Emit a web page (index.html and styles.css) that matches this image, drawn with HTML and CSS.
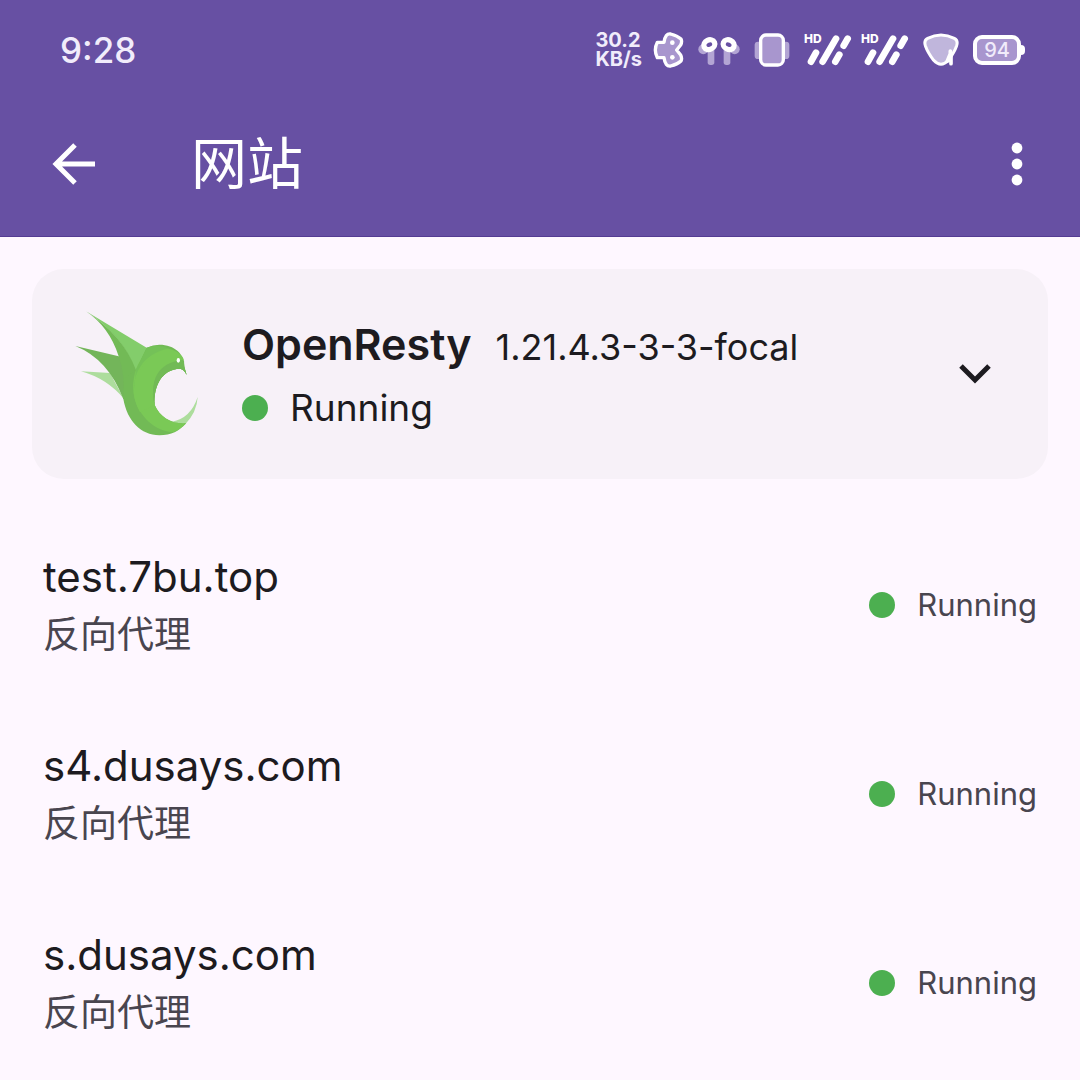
FILE: index.html
```html
<!DOCTYPE html>
<html lang="zh-CN">
<head>
    <meta charset="UTF-8">
    <meta name="viewport" content="width=device-width, initial-scale=1.0">
    <title>网站</title>
    <link rel="stylesheet" href="styles.css">
</head>
<body>
    <header class="top">
        <div class="status-bar">
            <span class="clock">9:28</span>
            <div class="status-icons">
                <div class="net-speed">30.2<br>KB/s</div>
                <svg class="butterfly" width="32" height="38" viewBox="0 0 96 114">
                    <path d="M36 34 Q40 6 56 9 Q76 14 87 24 Q91 32 86 42 L74 57 L86 72 Q91 82 87 90 Q76 100 56 105 Q40 108 36 80 L16 80 Q4 57 16 34 Z" fill="#a896ce" stroke="#fff" stroke-width="10" stroke-linejoin="round"/>
                    <circle cx="61" cy="35" r="7" fill="#fff"/>
                    <circle cx="61" cy="79" r="7" fill="#fff"/>
                </svg>
                <svg class="earbuds" width="42" height="36" viewBox="3 0 126 108">
                    <g fill="#b3a5d4">
                        <circle cx="19" cy="52" r="15"/>
                        <circle cx="113" cy="52" r="15"/>
                        <rect x="32" y="46" width="20" height="53" rx="8"/>
                        <rect x="80" y="46" width="20" height="53" rx="8"/>
                    </g>
                    <g fill="#6750a3" stroke="#fff" stroke-width="16">
                        <ellipse cx="37" cy="38" rx="17" ry="14" transform="rotate(-25 37 38)"/>
                        <ellipse cx="95" cy="38" rx="17" ry="14" transform="rotate(25 95 38)"/>
                    </g>
                </svg>
                <svg class="vibrate" width="36" height="34" viewBox="0 0 108 102">
                    <rect x="2" y="26" width="104" height="52" rx="10" fill="#b3a5d4"/>
                    <rect x="20" y="6" width="68" height="90" rx="16" fill="#a896ce" stroke="#fff" stroke-width="10"/>
                </svg>
                <div class="signals">
                    <div class="signal">
                        <span class="hd">HD</span>
                        <svg width="48" height="34" viewBox="0 0 144 102">
                            <path d="M21 86 L36 59 M56 86 L96 17 M94 86 L106 65 M119 38 L131 17" fill="none" stroke="#fff" stroke-width="20" stroke-linecap="round"/>
                        </svg>
                    </div>
                    <div class="signal">
                        <span class="hd">HD</span>
                        <svg width="48" height="34" viewBox="0 0 144 102">
                            <path d="M21 86 L36 59 M56 86 L96 17 M94 86 L106 65 M119 38 L131 17" fill="none" stroke="#fff" stroke-width="20" stroke-linecap="round"/>
                        </svg>
                    </div>
                </div>
                <svg class="wifi" width="36" height="34" viewBox="0 0 108 102">
                    <path d="M14 16 Q54 -4 94 16 Q106 22 101 38 Q94 58 76 82 Q54 106 32 82 Q14 58 7 38 Q2 22 14 16 Z" fill="#c0b6dc" stroke="#fff" stroke-width="9"/>
                    <path d="M82 54 V84 M82 62 L73 84 M84 68 V92" fill="none" stroke="#fff" stroke-width="11" stroke-linecap="round"/>
                </svg>
                <div class="battery">94</div>
            </div>
        </div>
        <nav class="app-bar">
            <button class="icon-button" aria-label="返回">
                <svg width="44" height="44" viewBox="0 0 44 44">
                    <path d="M43 22 H5 M23 3 L4 22 L23 41" fill="none" stroke="#fff" stroke-width="5"/>
                </svg>
            </button>
            <h1 class="title">网站</h1>
            <button class="icon-button" aria-label="更多">
                <svg width="12" height="44" viewBox="0 0 12 44" fill="#fff">
                    <circle cx="6" cy="6" r="5.4"/>
                    <circle cx="6" cy="22" r="5.4"/>
                    <circle cx="6" cy="38" r="5.4"/>
                </svg>
            </button>
        </nav>
    </header>

    <main>
        <section class="card">
            <svg class="logo" width="150" height="150" viewBox="0 0 450 450">
                <path d="M63 217 L150 222 L192 300 Q142 239 63 217 Z" fill="#addd9d"/>
                <path d="M46 141 L176 172 L236 215 L222 300 L190 300 Q144 180 46 141 Z" fill="#73b55a"/>
                <path d="M78 37 L260 146 L290 180 L226 216 Q190 110 78 37 Z" fill="#83cd6b"/>
                <path d="M78 37 Q190 110 228 214 L240 300 L190 300 Q196 226 176 172 Q148 84 78 37 Z" fill="#72ba56"/>
                <path d="M413 294 Q411 340 374 378 L336 368 Q392 358 413 294 Z" fill="#addd9d"/>
                <!-- body -->
                <path d="M260 146 Q279 137 298 137 C344 137 374 165 373 204 L380 228 Q373 212 360 209 C304 210 280 264 284 318 C300 354 334 376 378 373 C358 396 334 409 298 409 C242 408 202 366 190 300 L192 240 L228 212 Z" fill="#72ba56"/>
                <path d="M326 148 C240 130 204 236 226 306 C240 350 280 394 338 400 Q362 392 378 373 C334 376 300 354 284 318 Q266 272 286 232 C304 180 316 156 326 148 Z" fill="#7ac956"/>
                <path d="M360 209 C304 210 280 264 284 318 C268 270 276 190 322 148 Q366 158 373 204 L380 228 Q373 212 360 209 Z" fill="#72ba56"/>
                <path d="M322 148 C280 160 234 200 222 262 Q218 300 240 340 L284 318 C270 250 286 190 372 182 Q360 156 322 148 Z" fill="#7ac956"/>
                <path d="M360 209 C304 210 280 264 284 318 C268 262 290 194 372 184 L373 204 L380 228 Q373 212 360 209 Z" fill="#72ba56"/>
                <path d="M260 146 Q292 134 326 148 C262 162 222 208 222 270 L228 212 Z" fill="#74c158"/>
                <ellipse cx="355" cy="184" rx="5" ry="7" fill="#fff"/>
            </svg>
            <div class="app-info">
                <div class="app-name">
                    <h2>OpenResty</h2>
                    <span class="version">1.21.4.3-3-3-focal</span>
                </div>
                <div class="app-state"><i class="dot"></i>Running</div>
            </div>
            <button class="icon-button" aria-label="展开">
                <svg width="32" height="20" viewBox="0 0 32 20">
                    <path d="M2 2 L16 16 L30 2" fill="none" stroke="#1d1b20" stroke-width="5"/>
                </svg>
            </button>
        </section>

        <ul class="sites">
            <li class="site">
                <div class="site-info">
                    <div class="domain">test.7bu.top</div>
                    <div class="kind">反向代理</div>
                </div>
                <div class="site-state"><i class="dot"></i>Running</div>
            </li>
            <li class="site">
                <div class="site-info">
                    <div class="domain">s4.dusays.com</div>
                    <div class="kind">反向代理</div>
                </div>
                <div class="site-state"><i class="dot"></i>Running</div>
            </li>
            <li class="site">
                <div class="site-info">
                    <div class="domain">s.dusays.com</div>
                    <div class="kind">反向代理</div>
                </div>
                <div class="site-state"><i class="dot"></i>Running</div>
            </li>
        </ul>
    </main>
</body>
</html>
```
FILE: styles.css
```css
* {
    box-sizing: border-box;
}

body {
    margin: 0;
    background-color: #fef7ff;
    color: #1d1b20;
    font-family: Inter, "Noto Sans CJK SC", sans-serif;
}

.top {
    background-color: #6750a3;
    border-bottom: 1px solid #553c93;
    color: #fff;
}

.status-bar {
    display: flex;
    justify-content: space-between;
    align-items: center;
    height: 100px;
    padding: 0 59px 0 60px;
}

.clock {
    color: #f1ecfb;
    font-size: 35px;
    font-weight: 500;
    line-height: 44px;
}

.status-icons {
    display: flex;
    align-items: center;
    gap: 14px;
}

.net-speed {
    margin-right: -4px;
    color: #f1ecfb;
    font-size: 20px;
    font-weight: 700;
    line-height: 19px;
}

.signals {
    display: flex;
    gap: 9px;
}

.signal {
    position: relative;
    display: flex;
}

.hd {
    position: absolute;
    top: 0;
    left: 0;
    font-size: 12px;
    font-weight: 800;
    line-height: 12px;
}

.battery {
    position: relative;
    width: 48px;
    height: 30px;
    border: 4px solid #fff;
    border-radius: 9px;
    background-color: #a896ce;
    color: #f1ecfb;
    font-size: 20px;
    font-weight: 500;
    line-height: 22px;
    text-align: center;
}

.battery::after {
    content: "";
    position: absolute;
    top: 6px;
    right: -8px;
    width: 5px;
    height: 10px;
    border-radius: 0 4px 4px 0;
    background-color: #fff;
}

.app-bar {
    display: flex;
    align-items: center;
    height: 136px;
    padding: 0 57px 8px 52px;
}

.icon-button {
    display: flex;
    padding: 0;
    border: none;
    background: none;
    cursor: pointer;
}

.title {
    flex: 1;
    margin: 0 0 0 95px;
    font-size: 56px;
    font-weight: 400;
    line-height: 64px;
}

.card {
    display: flex;
    align-items: center;
    margin: 32px 32px 31px;
    padding: 30px 57px 30px 28px;
    border-radius: 32px;
    background-color: #f7f1f8;
}

.app-info {
    flex: 1;
    margin-left: 32px;
    padding-top: 4px;
}

.app-name {
    display: flex;
    align-items: baseline;
    gap: 24px;
}

.app-name h2 {
    margin: 0;
    font-size: 43px;
    font-weight: 600;
    line-height: 64px;
}

.version {
    font-size: 36px;
}

.app-state {
    display: flex;
    align-items: center;
    gap: 22px;
    font-size: 37px;
    line-height: 64px;
}

.dot {
    width: 26px;
    height: 26px;
    border-radius: 50%;
    background-color: #4caf50;
}

.sites {
    margin: 0;
    padding: 0;
    list-style: none;
}

.site {
    display: flex;
    justify-content: space-between;
    align-items: center;
    height: 189px;
    padding: 0 43px;
}

.domain {
    font-size: 42px;
    line-height: 60px;
}

.kind {
    color: #49454f;
    font-size: 37px;
    line-height: 56px;
}

.site-state {
    display: flex;
    align-items: center;
    gap: 22px;
    color: #49454f;
    font-size: 31px;
}
```
